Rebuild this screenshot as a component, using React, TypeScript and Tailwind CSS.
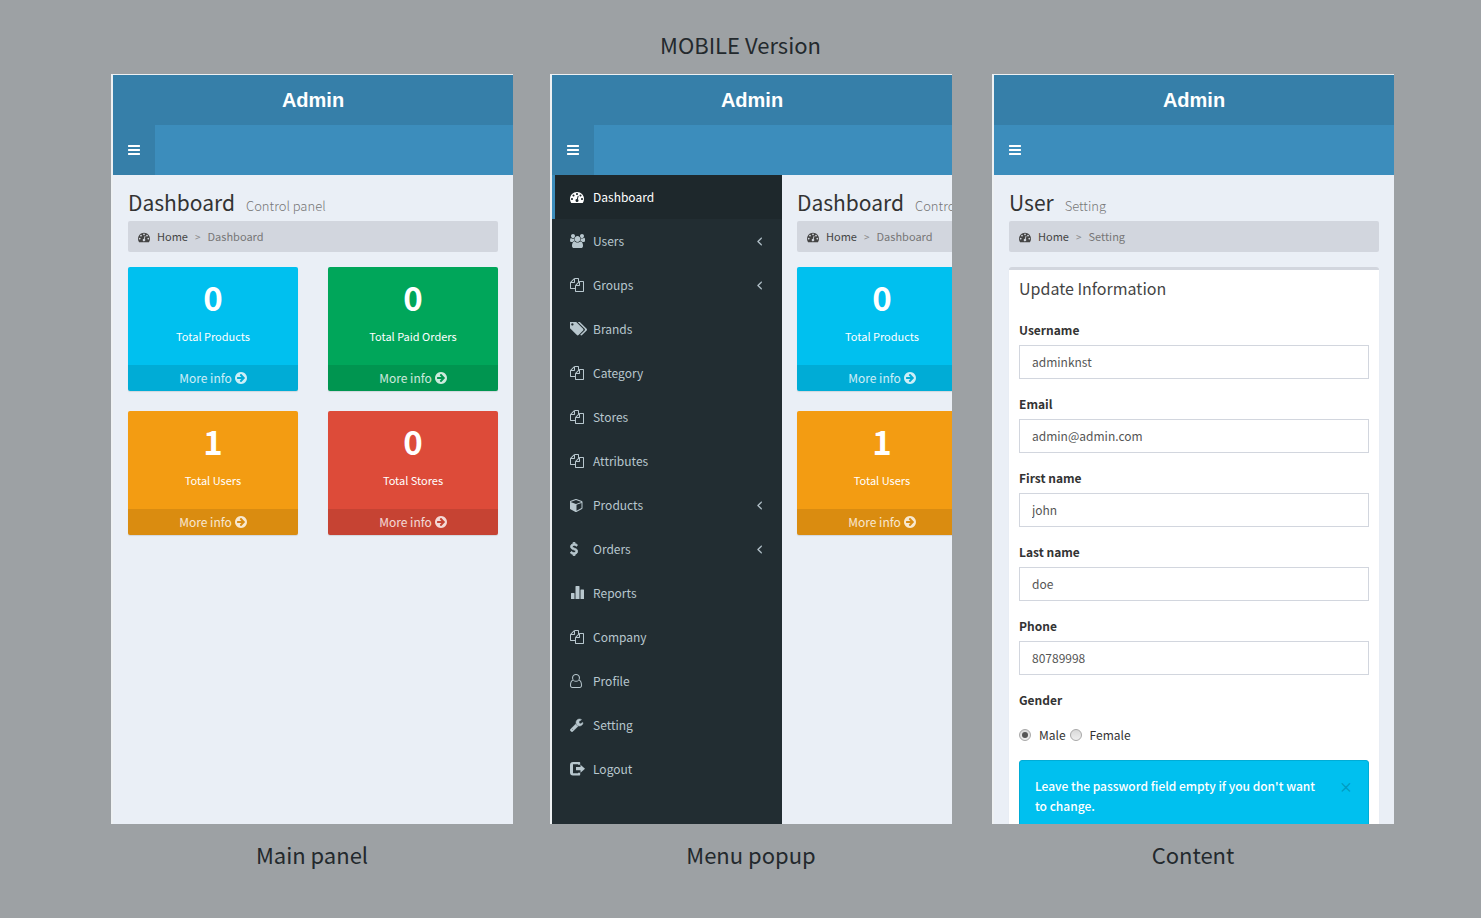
import { useState, type ReactNode } from "react";

type Glyph = { box: string; width: string; d: string; stroke?: number };

const glyphs: Record<
  | "bars"
  | "gauge"
  | "dashboard"
  | "users"
  | "files"
  | "tags"
  | "cube"
  | "dollar"
  | "stats"
  | "user"
  | "wrench"
  | "logout"
  | "angle"
  | "arrow",
  Glyph
> = {
  bars: {
    box: "128 0 1536 1792",
    width: "w-[12px]",
    d: "M1664 1344v128q0 26-19 45t-45 19h-1408q-26 0-45-19t-19-45v-128q0-26 19-45t45-19h1408q26 0 45 19t19 45zm0-512v128q0 26-19 45t-45 19h-1408q-26 0-45-19t-19-45v-128q0-26 19-45t45-19h1408q26 0 45 19t19 45zm0-512v128q0 26-19 45t-45 19h-1408q-26 0-45-19t-19-45v-128q0-26 19-45t45-19h1408q26 0 45 19t19 45z",
  },
  gauge: {
    box: "0 0 1792 1792",
    width: "w-[12px]",
    d: "M384 1152q0-53-37.5-90.5t-90.5-37.5-90.5 37.5-37.5 90.5 37.5 90.5 90.5 37.5 90.5-37.5 37.5-90.5zm192-448q0-53-37.5-90.5t-90.5-37.5-90.5 37.5-37.5 90.5 37.5 90.5 90.5 37.5 90.5-37.5 37.5-90.5zm428 481l101-382q6-26-7.5-48.5t-38.5-29.5-48 6.5-30 39.5l-101 382q-60 5-107 43.5t-63 98.5q-20 77 20 146t117 89 146-20 89-117q16-60-6-117t-72-91zm660-33q0-53-37.5-90.5t-90.5-37.5-90.5 37.5-37.5 90.5 37.5 90.5 90.5 37.5 90.5-37.5 37.5-90.5zm-640-640q0-53-37.5-90.5t-90.5-37.5-90.5 37.5-37.5 90.5 37.5 90.5 90.5 37.5 90.5-37.5 37.5-90.5zm448 192q0-53-37.5-90.5t-90.5-37.5-90.5 37.5-37.5 90.5 37.5 90.5 90.5 37.5 90.5-37.5 37.5-90.5zm320 448q0 261-141 483-19 29-54 29h-1402q-35 0-54-29-141-221-141-483 0-182 71-348t191-286 286-191 348-71 348 71 286 191 191 286 71 348z",
  },
  dashboard: {
    box: "0 0 1792 1792",
    width: "w-[14px]",
    d: "M384 1152q0-53-37.5-90.5t-90.5-37.5-90.5 37.5-37.5 90.5 37.5 90.5 90.5 37.5 90.5-37.5 37.5-90.5zm192-448q0-53-37.5-90.5t-90.5-37.5-90.5 37.5-37.5 90.5 37.5 90.5 90.5 37.5 90.5-37.5 37.5-90.5zm428 481l101-382q6-26-7.5-48.5t-38.5-29.5-48 6.5-30 39.5l-101 382q-60 5-107 43.5t-63 98.5q-20 77 20 146t117 89 146-20 89-117q16-60-6-117t-72-91zm660-33q0-53-37.5-90.5t-90.5-37.5-90.5 37.5-37.5 90.5 37.5 90.5 90.5 37.5 90.5-37.5 37.5-90.5zm-640-640q0-53-37.5-90.5t-90.5-37.5-90.5 37.5-37.5 90.5 37.5 90.5 90.5 37.5 90.5-37.5 37.5-90.5zm448 192q0-53-37.5-90.5t-90.5-37.5-90.5 37.5-37.5 90.5 37.5 90.5 90.5 37.5 90.5-37.5 37.5-90.5zm320 448q0 261-141 483-19 29-54 29h-1402q-35 0-54-29-141-221-141-483 0-182 71-348t191-286 286-191 348-71 348 71 286 191 191 286 71 348z",
  },
  users: {
    box: "64 0 1920 1792",
    width: "w-[15px]",
    d: "M657 896q-162 5-265 128h-134q-82 0-138-40.5t-56-118.5q0-353 124-353 6 0 43.5 21t97.5 42.5 119 21.5q67 0 133-23-5 37-5 66 0 159 93 293zm1071 637q0 120-73 189.5t-194 69.5h-874q-121 0-194-69.5t-73-189.5q0-53 3.5-103.5t14-109 26.5-108.5 43-97.5 62-81 85.5-53.5 111.5-20q10 0 43 21.5t73 48 107 48 135 21.5 135-21.5 107-48 73-48 43-21.5q61 0 111.5 20t85.5 53.5 62 81 43 97.5 26.5 108.5 14 109 3.5 103.5zm-1024-1277q0 106-75 181t-181 75-181-75-75-181 75-181 181-75 181 75 75 181zm704 384q0 159-112.5 271.5t-271.5 112.5-271.5-112.5-112.5-271.5 112.5-271.5 271.5-112.5 271.5 112.5 112.5 271.5zm576 225q0 78-56 118.5t-138 40.5h-134q-103-123-265-128 93-134 93-293 0-29-5-66 66 23 133 23 59 0 119-21.5t97.5-42.5 43.5-21q124 0 124 353zm-128-609q0 106-75 181t-181 75-181-75-75-181 75-181 181-75 181 75 75 181z",
  },
  files: {
    box: "0 0 1792 1792",
    width: "w-[14px]",
    d: "M1696 384q40 0 68 28t28 68v1216q0 40-28 68t-68 28h-960q-40 0-68-28t-28-68v-288h-544q-40 0-68-28t-28-68v-672q0-40 20-88t48-76l408-408q28-28 76-48t88-20h416q40 0 68 28t28 68v328q68-40 128-40h416zm-544 213l-299 299h299v-299zm-640-384l-299 299h299v-299zm196 647l316-316v-416h-384v416q0 40-28 68t-68 28h-416v640h512v-256q0-40 20-88t48-76zm956 804v-1152h-384v416q0 40-28 68t-68 28h-416v640h896z",
  },
  tags: {
    box: "64 256 1835 1392",
    width: "w-[17px]",
    d: "M448 448q0-53-37.5-90.5t-90.5-37.5-90.5 37.5-37.5 90.5 37.5 90.5 90.5 37.5 90.5-37.5 37.5-90.5zm1067 576q0 53-37 90l-491 492q-39 37-91 37-53 0-90-37l-715-716q-38-37-64.5-101t-26.5-117v-416q0-52 38-90t90-38h416q53 0 117 26.5t102 64.5l715 714q37 39 37 91zm384 0q0 53-37 90l-491 492q-39 37-91 37-36 0-59-14t-53-45l470-470q37-37 37-90 0-52-37-91l-715-714q-38-38-102-64.5t-117-26.5h224q53 0 117 26.5t102 64.5l715 714q37 39 37 91z",
  },
  cube: {
    box: "128 0 1536 1792",
    width: "w-[13px]",
    d: "M896 1629l640-349v-636l-640 233v752zm-64-865l698-254-698-254-698 254zm832-252v768q0 35-18 65t-49 47l-704 384q-28 16-61 16t-61-16l-704-384q-31-17-49-47t-18-65v-768q0-40 23-73t61-47l704-256q22-8 44-8t44 8l704 256q38 14 61 47t23 73z",
  },
  dollar: {
    box: "384 0 1024 1792",
    width: "w-[8px]",
    stroke: 110,
    d: "M1362 1185q0 153-99.5 263.5t-258.5 136.5v175q0 14-9 23t-23 9h-135q-13 0-22.5-9.5t-9.5-22.5v-175q-66-9-127.5-31t-101.5-44.5-74-48-46.5-37.5-17.5-18q-17-21-2-41l103-135q7-10 23-12 15-2 24 9l2 2q113 99 243 125 37 8 74 8 81 0 142.5-43t61.5-122q0-28-15-53t-33.5-42-58.5-37.5-66-32-80-32.5q-39-16-61.5-25t-61.5-26.5-62.5-31-56.5-35.5-53.5-42.5-43.5-49-35.5-58-21-66.5-8.5-78q0-138 98-242t255-134v-180q0-13 9.5-22.5t22.5-9.5h135q14 0 23 9t9 23v176q57 6 110.5 23t87 33.5 63.5 37.5 39 29 15 14q17 18 5 38l-81 146q-8 15-23 16-14 3-27-7-3-3-14.5-12t-39-26.5-58.5-32-74.5-26-85.5-11.5q-95 0-155 43t-60 111q0 26 8.5 48t29.5 41.5 39.5 33 56 31 60.5 27 70 27.5q53 20 81 31.5t76 35 75.5 42.5 62 50 53 63.5 31.5 76.5 13 94z",
  },
  stats: {
    box: "0 0 14 14",
    width: "w-[14px]",
    d: "M1.5 7h2.500q.5 0 .5.500v5.500h-3.500v-5.500q0-.5.5-.5zM6 0h3q.5 0 .5.500v12.500h-4v-12.500q0-.5.5-.5zM11 3.500h2.500q.5 0 .5.500v9h-3.500v-9q0-.5.5-.5z",
  },
  user: {
    box: "0 0 14 14",
    width: "w-[14px]",
    d: "M6 0a3.800 3.800 0 0 1 3.400 5.700C11.200 6.300 12 8.600 12 11.200 12 12.900 11 14 9.600 14H2.400C1 14 0 12.900 0 11.200 0 8.600.8 6.300 2.600 5.700A3.800 3.800 0 0 1 6 0zM6 1a2.900 2.900 0 1 0 0 5.800A2.900 2.900 0 0 0 6 1zM3.200 6.600C1.800 6.900 1 8.800 1 11.200 1 12.300 1.600 13 2.400 13h7.200c.8 0 1.400-.7 1.400-1.800 0-2.400-.8-4.300-2.200-4.600a3.900 3.900 0 0 1-5.600 0z",
  },
  wrench: {
    box: "64 0 1792 1792",
    width: "w-[14px]",
    stroke: 60,
    d: "M448 1472q0-26-19-45t-45-19-45 19-19 45 19 45 45 19 45-19 19-45zm644-420l-682 682q-37 37-90 37-52 0-91-37l-106-108q-38-36-38-90 0-53 38-91l681-681q39 98 114.500 173.500t173.500 114.500zm634-435q0 39-23 106-47 134-164.500 217.500t-258.500 83.500q-185 0-316.500-131.500t-131.500-316.500 131.500-316.500 316.500-131.500q58 0 121.500 16.500t107.500 46.500q16 11 16 28t-16 28l-293 169v224l193 107q5-3 79-48.500t135.500-81 70.500-35.500q15 0 23.500 10t8.500 25z",
  },
  logout: {
    box: "0 0 15 14",
    width: "w-[15px]",
    d: "M3 0h6.500q.7 0 .7.700v2h-2.200v-.5h-5v9h5v-.5h2.200v2q0 .7-.7.700h-6.500q-3 0-3-3v-7.400q0-3 3-3zM10.500 2.700l4.500 4-4.500 4v-2.400h-4.500v-3.200h4.500z",
  },
  angle: {
    box: "576 0 640 1792",
    width: "w-[5px]",
    stroke: 50,
    d: "M1203 544q0 13-10 23l-393 393 393 393q10 10 10 23t-10 23l-50 50q-10 10-23 10t-23-10l-466-466q-10-10-10-23t10-23l466-466q10-10 23-10t23 10l50 50q10 10 10 23z",
  },
  arrow: {
    box: "128 0 1536 1792",
    width: "w-[12px]",
    d: "M1413 896q0-27-18-45l-91-91-362-362q-18-18-45-18t-45 18l-91 91q-18 18-18 45t18 45l189 189h-502q-26 0-45 19t-19 45v128q0 26 19 45t45 19h502l-189 189q-18 18-18 45t18 45l91 91q18 18 45 18t45-18l362-362 91-91q18-18 18-45zm251 0q0 209-103 385.5t-279.5 279.5-385.5 103-385.5-103-279.5-279.5-103-385.5 103-385.5 279.5-279.5 385.5-103 385.5 103 279.5 279.5 103 385.5z",
  },
};

type GlyphName = keyof typeof glyphs;

function Icon({ name }: { name: GlyphName }) {
  const g = glyphs[name];
  return (
    <svg
      viewBox={g.box}
      className={`${g.width} h-[14px] shrink-0`}
      fill="currentColor"
      fillRule="evenodd"
      stroke={g.stroke ? "currentColor" : "none"}
      strokeWidth={g.stroke}
      aria-hidden="true"
    >
      <path d={g.d} />
    </svg>
  );
}

function Phone({ caption, toggled, children }: { caption: string; toggled: boolean; children: ReactNode }) {
  return (
    <figure className="flex max-w-[402px] flex-col">
      <div className="flex aspect-[402/750] flex-col overflow-hidden border-t border-l-2 border-[#eef1f3] bg-[#eaeff6]">
        <header className="shrink-0 text-white">
          <a
            href="#home"
            className="block bg-[#367fa9] text-center font-['Liberation_Sans',sans-serif] text-[20px] leading-[50px] font-bold"
          >
            Admin
          </a>
          <nav className="flex h-[50px] bg-[#3c8dbc]">
            <button
              type="button"
              aria-label="Toggle navigation"
              className={`flex items-center px-[15px] ${toggled ? "bg-[#367fa9]" : ""}`}
            >
              <Icon name="bars" />
            </button>
          </nav>
        </header>
        {children}
      </div>
      <figcaption className="mt-[13px] text-center text-[22px] leading-[34px] text-[#23292d]">{caption}</figcaption>
    </figure>
  );
}

function PageHeading({ title, detail, crumb }: { title: string; detail: string; crumb: string }) {
  return (
    <div className="px-[15px] pt-[14px]">
      <h1 className="flex items-baseline gap-[11px] text-[21px] leading-[26px] text-[#333]">
        {title}
        <small className="text-[13px] leading-[16px] font-light whitespace-nowrap text-[#777]">{detail}</small>
      </h1>
      <ol className="mt-[6px] flex h-[31px] items-center rounded-[2px] bg-[#d2d6de] px-[10px] text-[11px] text-[#777]">
        <li>
          <a href="#home" className="flex items-center gap-[7px] text-[#444]">
            <Icon name="gauge" />
            Home
          </a>
        </li>
        <li aria-hidden="true" className="px-[7px] text-[10px] text-[#888]">
          &gt;
        </li>
        <li>{crumb}</li>
      </ol>
    </div>
  );
}

const stats = [
  { value: 0, label: "Total Products", color: "bg-[#00c0ef]" },
  { value: 0, label: "Total Paid Orders", color: "bg-[#00a65a]" },
  { value: 1, label: "Total Users", color: "bg-[#f39c12]" },
  { value: 0, label: "Total Stores", color: "bg-[#dd4b39]" },
];

function Dashboard() {
  return (
    <main className="w-full shrink-0">
      <PageHeading title="Dashboard" detail="Control panel" crumb="Dashboard" />
      <div className="grid grid-cols-2 gap-x-[30px] gap-y-5 p-[15px] text-center text-white">
        {stats.map((s) => (
          <section key={s.label} className={`overflow-hidden rounded-[2px] shadow-[0_1px_1px_rgba(0,0,0,0.1)] ${s.color}`}>
            <div className="h-[98px] pt-[9px]">
              <h3 className="text-[33px] leading-[42px] font-bold">{s.value}</h3>
              <p className="mt-[10px] text-[11px] leading-[17px]">{s.label}</p>
            </div>
            <a
              href="#more"
              className="flex h-[26px] items-center justify-center gap-[3px] bg-black/10 text-[12px] text-white/80"
            >
              More info
              <Icon name="arrow" />
            </a>
          </section>
        ))}
      </div>
    </main>
  );
}

const menu: { label: string; icon: GlyphName; nested?: boolean; active?: boolean }[] = [
  { label: "Dashboard", icon: "dashboard", active: true },
  { label: "Users", icon: "users", nested: true },
  { label: "Groups", icon: "files", nested: true },
  { label: "Brands", icon: "tags" },
  { label: "Category", icon: "files" },
  { label: "Stores", icon: "files" },
  { label: "Attributes", icon: "files" },
  { label: "Products", icon: "cube", nested: true },
  { label: "Orders", icon: "dollar", nested: true },
  { label: "Reports", icon: "stats" },
  { label: "Company", icon: "files" },
  { label: "Profile", icon: "user" },
  { label: "Setting", icon: "wrench" },
  { label: "Logout", icon: "logout" },
];

function Sidebar() {
  return (
    <aside className="w-[230px] shrink-0 bg-[#222d32] text-[12px]">
      <ul>
        {menu.map((m) => (
          <li key={m.label}>
            <a
              href={`#${m.label.toLowerCase()}`}
              className={`flex h-[44px] items-center border-l-[3px] pr-5 pl-[15px] ${
                m.active ? "border-[#3c8dbc] bg-[#1e282c] text-white" : "border-transparent text-[#b8c7ce]"
              }`}
            >
              <span className="flex w-[23px] shrink-0">
                <Icon name={m.icon} />
              </span>
              <span className="grow">{m.label}</span>
              {m.nested && <Icon name="angle" />}
            </a>
          </li>
        ))}
      </ul>
    </aside>
  );
}

const fields = [
  { id: "username", label: "Username", value: "adminknst", type: "text" },
  { id: "email", label: "Email", value: "admin@admin.com", type: "email" },
  { id: "first-name", label: "First name", value: "john", type: "text" },
  { id: "last-name", label: "Last name", value: "doe", type: "text" },
  { id: "phone", label: "Phone", value: "80789998", type: "tel" },
];

function Settings() {
  const [gender, setGender] = useState("Male");
  return (
    <main>
      <PageHeading title="User" detail="Setting" crumb="Setting" />
      <div className="p-[15px]">
        <form className="rounded-[3px] border-t-[3px] border-[#d2d6de] bg-white px-[10px] text-[12px] leading-[20px] text-[#333] shadow-[0_1px_1px_rgba(0,0,0,0.1)]">
          <h3 className="pt-2 pb-[22px] text-[16px] text-[#444]">Update Information</h3>
          {fields.map((f) => (
            <div key={f.id} className="mb-[15px]">
              <label htmlFor={f.id} className="mb-[5px] block font-bold">
                {f.label}
              </label>
              <input
                id={f.id}
                type={f.type}
                defaultValue={f.value}
                className="block h-[34px] w-full border border-[#d2d6de] bg-white px-3 pb-[2px] text-[#555]"
              />
            </div>
          ))}
          <fieldset className="pb-[15px]">
            <legend className="mb-[15px] font-bold">Gender</legend>
            <div className="flex gap-1">
              {["Male", "Female"].map((g) => (
                <label key={g} className="flex items-center gap-2">
                  <input
                    type="radio"
                    name="gender"
                    checked={gender === g}
                    onChange={() => setGender(g)}
                    className="flex size-3 appearance-none items-center justify-center rounded-full border border-[#a8a8a8] bg-linear-to-b from-[#d9d9d9] to-[#efefef] before:size-[6px] before:rounded-full checked:before:bg-[#555]"
                  />
                  {g}
                </label>
              ))}
            </div>
          </fieldset>
          <div
            role="alert"
            className="flex items-start justify-between rounded-[3px] border border-[#00acd6] bg-[#00c0ef] p-[15px] text-white"
          >
            <p className="max-w-[290px] font-medium">Leave the password field empty if you don't want to change.</p>
            <button type="button" aria-label="Close" className="text-[14px] font-bold text-black/20">
              ×
            </button>
          </div>
        </form>
      </div>
    </main>
  );
}

export default function App() {
  return (
    <div className="min-h-screen bg-[#9da1a4] pb-6 font-['Noto_Sans_CJK_SC',sans-serif]">
      <h2 className="pt-[27px] pb-[13px] text-center text-[22px] leading-[34px] text-[#23292d]">MOBILE Version</h2>
      <div className="grid grid-cols-[439fr_442fr_402fr] pr-[87px] pl-[111px]">
        <Phone caption="Main panel" toggled>
          <Dashboard />
        </Phone>
        <Phone caption="Menu popup" toggled>
          <div className="flex grow">
            <Sidebar />
            <Dashboard />
          </div>
        </Phone>
        <Phone caption="Content" toggled={false}>
          <Settings />
        </Phone>
      </div>
    </div>
  );
}
